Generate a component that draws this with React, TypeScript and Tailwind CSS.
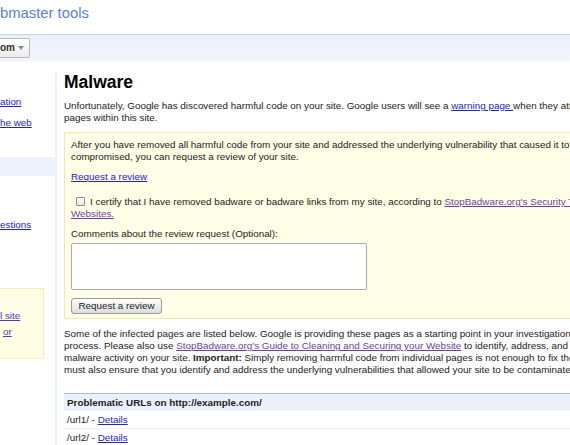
import React from 'react';

const linkCls = 'text-[#2323cc] underline';
const visitedCls = 'text-[#6a3fa8] underline';

function Sidebar() {
  return (
    <div className="w-[57px] shrink-0 bg-[#eef2fa] pr-[2px] flex flex-col">
      <div className="h-[85px] bg-white pt-[24px] text-[9.85px] leading-[12px] whitespace-nowrap">
        <a className={linkCls}>ation</a>
        <div className="mt-[9px]">
          <a className={linkCls}>he web</a>
        </div>
      </div>
      <div className="h-[19px]" />
      <div className="flex-1 bg-white pt-[43px] text-[9.85px] leading-[12px] whitespace-nowrap">
        <a className={linkCls}>estions</a>
        <div className="mt-[57px] w-[44px] border border-l-0 border-[#f6ecb8] bg-[#fffde4] pt-[21px] pb-[20px]">
          <div>
            <a className="text-[#4f3fbf] underline">l site</a>
          </div>
          <div className="mt-[4px] pl-[3px]">
            <a className="text-[#4f3fbf] underline">or</a>
          </div>
        </div>
      </div>
    </div>
  );
}

function ReviewBox() {
  return (
    <div className="mt-[8px] border border-r-0 border-[#f3e7b0] bg-[#fffee6] pl-[6px] pt-[6px] pb-[4px] whitespace-nowrap">
      <div className="leading-[12px]">
        After you have removed all harmful code from your site and addressed the underlying vulnerability that caused it to be
        <br />
        compromised, you can request a review of your site.
      </div>
      <div className="mt-[8px] leading-[12px]">
        <a className={linkCls}>Request a review</a>
      </div>
      <div className="mt-[13px] leading-[12px]">
        <span className="inline-block align-[-1px] ml-[5px] mr-[5px] w-[9px] h-[9px] border border-[#8f8f8f] rounded-[1px] bg-gradient-to-b from-white to-[#e6e6e6]" />
        I certify that I have removed badware or badware links from my site, according to{' '}
        <a className={visitedCls}>StopBadware.org&apos;s Security Tips for Cleaning and Securing</a>
        <br />
        <a className={visitedCls}>Websites.</a>
      </div>
      <div className="mt-[8px] leading-[12px]">Comments about the review request (Optional):</div>
      <textarea className="block mt-[3px] w-[296px] h-[47px] resize-none border border-[#a9a9a9] rounded-[2px] bg-white" />
      <button className="block mt-[8px] w-[91px] h-[16px] border border-[#9a9a9a] rounded-[3px] bg-gradient-to-b from-white to-[#dcdcdc] text-[9.85px] leading-[14px] text-[#222]">
        Request a review
      </button>
    </div>
  );
}

export default function App() {
  return (
    <div
      className="w-[570px] h-[445px] overflow-hidden bg-white text-[#222]"
      style={{ fontFamily: '"Liberation Sans", Arial, sans-serif' }}
    >
      {/* title */}
      <div className="h-[34px] pt-[5px] text-[14.8px] leading-[17px] text-[#5b7fd7] whitespace-nowrap">
        bmaster tools
      </div>

      {/* site bar */}
      <div className="h-[28px] border-t border-[#c5d3ef] bg-gradient-to-b from-[#eaeff9] to-[#f3f6fc] pt-[3px]">
        <div className="flex items-center w-[30px] h-[20px] border border-l-0 border-[#b9b9b9] rounded-r-[2px] bg-gradient-to-b from-white to-[#ececec]">
          <span className="text-[10px] font-bold leading-[12px] text-[#333]">om</span>
          <svg className="ml-[3px]" width="6" height="4" viewBox="0 0 6 4">
            <path d="M0 0h6L3 4z" fill="#8a8a8a" />
          </svg>
        </div>
      </div>

      <div className="mt-[10px] flex h-[400px]">
        <Sidebar />

        <div className="w-[720px] shrink-0 pl-[7px] text-[9.85px]">
          <h1 className="text-[17.5px] font-bold leading-[20px] text-black">Malware</h1>

          <p className="mt-[8px] leading-[12px] whitespace-nowrap">
            Unfortunately, Google has discovered harmful code on your site. Google users will see a{' '}
            <a className={linkCls}>warning page </a>when they attempt to visit
            <br />
            pages within this site.
          </p>

          <ReviewBox />

          <p className="mt-[9px] leading-[12px] whitespace-nowrap">
            Some of the infected pages are listed below. Google is providing these pages as a starting point in your investigation of the problem and the cleanup
            <br />
            process. Please also use{' '}
            <a className={visitedCls}>StopBadware.org&apos;s Guide to Cleaning and Securing your Website</a> to identify, address, and remove all
            <br />
            malware activity on your site. <b>Important:</b> Simply removing harmful code from individual pages is not enough to fix the problem. You
            <br />
            must also ensure that you identify and address the underlying vulnerabilities that allowed your site to be contaminated.
          </p>

          <div className="mt-[17px] border-t border-[#a9bde8]">
            <div className="h-[17px] bg-[#ebf0fa] pl-[3px] font-bold leading-[17px]">
              Problematic URLs on http://example.com/
            </div>
            <div className="h-[18px] border-b border-[#eef1f8] pl-[3px] leading-[17px]">
              /url1/ - <a className={linkCls}>Details</a>
            </div>
            <div className="h-[17px] pl-[3px] leading-[17px]">
              /url2/ - <a className={linkCls}>Details</a>
            </div>
          </div>
        </div>
      </div>
    </div>
  );
}
